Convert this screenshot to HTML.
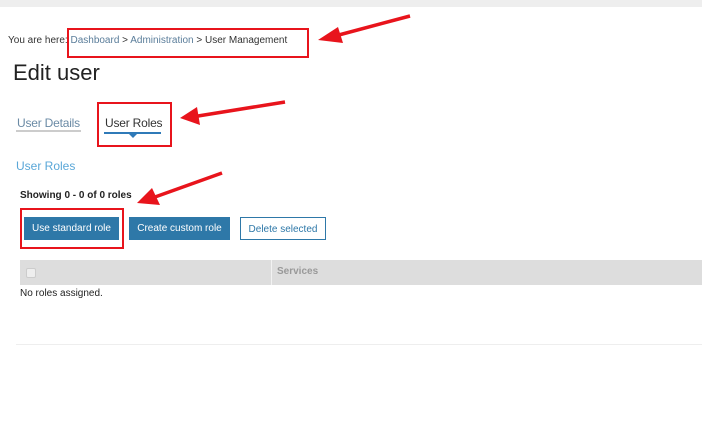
<!DOCTYPE html>
<html><head><style>
body{margin:0;width:702px;height:441px;background:#fff;font-family:"Liberation Sans",sans-serif;position:relative;overflow:hidden}
.a{position:absolute;white-space:nowrap}
.btn{position:absolute;top:217px;height:23px;line-height:23px;font-size:10px;text-align:center;box-sizing:border-box}
</style></head><body>
<div class="a" style="left:0;top:0;width:702px;height:7px;background:#eeeeee"></div>
<div class="a" style="left:8px;top:35px;font-size:10px;color:#333">You are here: <span style="color:#5a7d9a">Dashboard</span> &gt; <span style="color:#5a7d9a">Administration</span> &gt; User Management</div>
<div class="a" style="left:13px;top:60px;font-size:22px;color:#222">Edit user</div>
<div class="a" style="left:17px;top:116px;font-size:12px;color:#6a8aa5;letter-spacing:-0.2px">User Details</div>
<div class="a" style="left:16px;top:130px;width:65px;height:2px;background:#ccc"></div>
<div class="a" style="left:105px;top:116px;font-size:12px;color:#333;letter-spacing:-0.2px">User Roles</div>
<div class="a" style="left:104px;top:132px;width:57px;height:2px;background:#2f7ab8"></div>
<div class="a" style="left:129px;top:134px;width:0;height:0;border-left:4px solid transparent;border-right:4px solid transparent;border-top:4px solid #2f7ab8"></div>
<div class="a" style="left:16px;top:159px;font-size:12px;color:#5aa7d8">User Roles</div>
<div class="a" style="left:20px;top:190px;font-size:10px;font-weight:bold;color:#222">Showing 0 - 0 of 0 roles</div>
<div class="btn" style="left:24px;width:95px;background:#2e78a8;color:#fff">Use standard role</div>
<div class="btn" style="left:129px;width:101px;background:#2e78a8;color:#fff">Create custom role</div>
<div class="btn" style="left:240px;width:86px;border:1px solid #2e78a8;color:#2e78a8;background:#fff">Delete selected</div>
<div class="a" style="left:20px;top:260px;width:682px;height:25px;background:#dddddd"></div>
<div class="a" style="left:271px;top:260px;width:1px;height:25px;background:#f2f2f2"></div>
<div class="a" style="left:26px;top:268px;width:8px;height:8px;background:#eee;border:1px solid #ccc;border-radius:2px"></div>
<div class="a" style="left:277px;top:266px;font-size:10px;font-weight:bold;color:#999">Services</div>
<div class="a" style="left:20px;top:288px;font-size:10px;color:#222">No roles assigned.</div>
<div class="a" style="left:16px;top:344px;width:686px;height:1px;background:#eee"></div>
<div class="a" style="left:67px;top:28px;width:238px;height:26px;border:2px solid #e8141c"></div>
<div class="a" style="left:97px;top:102px;width:71px;height:41px;border:2px solid #e8141c"></div>
<div class="a" style="left:20px;top:208px;width:100px;height:37px;border:2px solid #e8141c"></div>
<svg class="a" style="left:0;top:0" width="702" height="441">
<g stroke="#e8141c" stroke-width="3.5" fill="#e8141c">
<line x1="410" y1="16" x2="335" y2="36"/><polygon points="318,40 338,27 343,43" stroke="none"/>
<line x1="285" y1="102" x2="198" y2="116"/><polygon points="180,118 197,107 200,125" stroke="none"/>
<line x1="222" y1="173" x2="155" y2="197"/><polygon points="137,203 152,188 160,205" stroke="none"/>
</g></svg>
</body></html>
